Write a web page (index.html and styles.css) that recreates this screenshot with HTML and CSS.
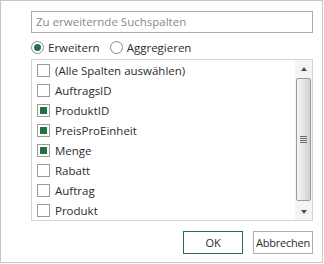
FILE: index.html
```html
<!DOCTYPE html>
<html lang="de">
<head>
<meta charset="utf-8">
<link rel="stylesheet" href="styles.css">
</head>
<body>
<div class="dialog">
  <div class="search">Zu erweiternde Suchspalten</div>
  <div class="modes">
    <div class="radio"><span class="ring on"></span>Erweitern</div>
    <div class="radio"><span class="ring"></span>Aggregieren</div>
  </div>
  <div class="list">
    <ul class="items">
      <li><span class="box"></span>(Alle Spalten auswählen)</li>
      <li><span class="box"></span>AuftragsID</li>
      <li><span class="box on"></span>ProduktID</li>
      <li><span class="box on"></span>PreisProEinheit</li>
      <li><span class="box on"></span>Menge</li>
      <li><span class="box"></span>Rabatt</li>
      <li><span class="box"></span>Auftrag</li>
      <li><span class="box"></span>Produkt</li>
    </ul>
    <div class="scrollbar">
      <div class="arrow"><span class="tri up"></span></div>
      <div class="track"><div class="thumb"><span class="grip"></span></div></div>
      <div class="arrow"><span class="tri down"></span></div>
    </div>
  </div>
  <div class="actions">
    <button class="btn primary">OK</button>
    <button class="btn">Abbrechen</button>
  </div>
</div>
</body>
</html>
```
FILE: styles.css
```css
* { box-sizing: border-box; }
html, body { margin: 0; padding: 0; background: #fff; }
body {
  font-family: "Open Sans", "Noto Sans", sans-serif;
  font-size: 11.5px;
  color: #2b2b2b;
}
.dialog {
  width: 323px;
  height: 263px;
  border: 1px solid #c6c6c6;
  padding: 10px 9px 0 30px;
  display: flex;
  flex-direction: column;
}
.search {
  height: 22px;
  border: 1px solid #ababab;
  padding-left: 4px;
  line-height: 20px;
  color: #8a8a8a;
}
.modes {
  display: flex;
  align-items: center;
  gap: 10px;
  height: 24px;
  margin-top: 2px;
}
.radio {
  display: flex;
  align-items: center;
  gap: 4px;
}
.ring {
  width: 13px;
  height: 13px;
  border: 1px solid #8c8c8c;
  border-radius: 50%;
  display: flex;
  align-items: center;
  justify-content: center;
}
.ring.on::after {
  content: "";
  width: 7px;
  height: 7px;
  border-radius: 50%;
  background: #217346;
}
.list {
  height: 162px;
  border: 1px solid #d4d4d4;
  display: flex;
}
.items {
  list-style: none;
  margin: 0;
  padding: 0 0 0 5px;
  flex: 1;
}
.items li {
  height: 20px;
  display: flex;
  align-items: center;
  gap: 5px;
}
.box {
  width: 13px;
  height: 13px;
  border: 1px solid #9a9a9a;
  display: flex;
  align-items: center;
  justify-content: center;
}
.box.on::after {
  content: "";
  width: 7px;
  height: 7px;
  background: #217346;
}
.scrollbar {
  width: 17px;
  display: flex;
  flex-direction: column;
  background: #f4f4f4;
}
.arrow {
  height: 17px;
  display: flex;
  align-items: center;
  justify-content: center;
}
.tri {
  width: 0;
  height: 0;
  border-left: 3.5px solid transparent;
  border-right: 3.5px solid transparent;
}
.tri.up { border-bottom: 4px solid #505050; }
.tri.down { border-top: 4px solid #505050; }
.track {
  flex: 1;
  padding: 1px 1px 2px 1px;
  display: flex;
}
.thumb {
  flex: 1;
  border: 1px solid #9c9c9c;
  border-radius: 2px;
  background: linear-gradient(to right, #f2f2f2 0%, #e8e8e8 40%, #d0d0d0 100%);
  display: flex;
  align-items: center;
  justify-content: center;
}
.grip {
  width: 7px;
  height: 7px;
  background: repeating-linear-gradient(to bottom, #6a6a6a 0, #6a6a6a 1px, #e6e6e6 1px, #e6e6e6 2px);
}
.actions {
  display: flex;
  justify-content: flex-end;
  gap: 10px;
  margin-top: 10px;
}
.btn {
  width: 60px;
  height: 23px;
  border: 1px solid #adadad;
  background: #fff;
  font-family: inherit;
  font-size: 11px;
  letter-spacing: -0.2px;
  color: #2b2b2b;
  padding: 0;
}
.btn.primary { border-color: #217346; }
```
